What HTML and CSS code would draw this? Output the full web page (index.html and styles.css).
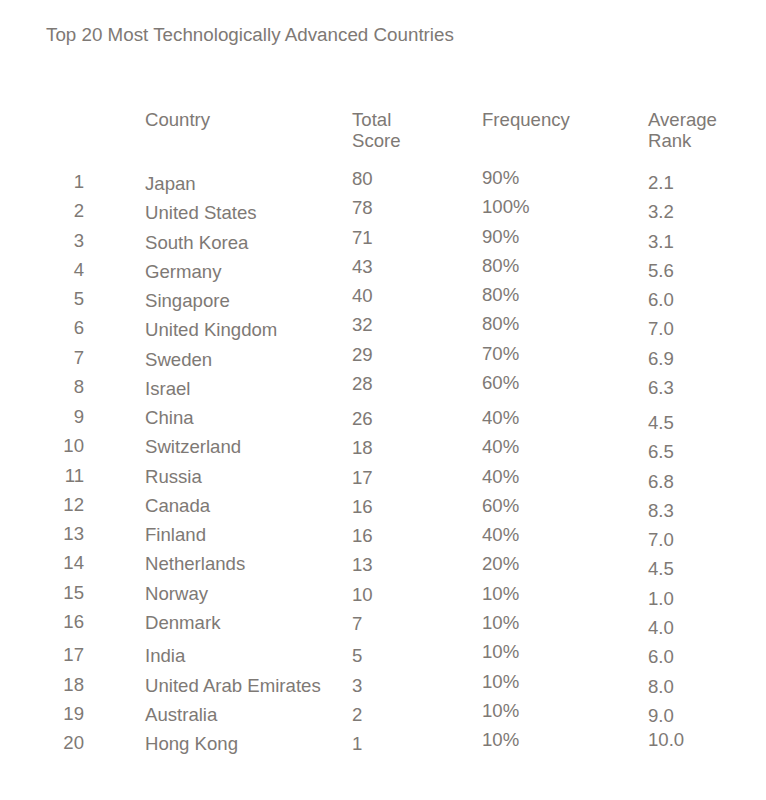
FILE: index.html
```html
<!DOCTYPE html>
<html lang="en">
<head>
<meta charset="utf-8">
<title>Top 20 Most Technologically Advanced Countries</title>
<link rel="stylesheet" href="styles.css">
</head>
<body>
<main class="page">
  <h1 class="title">Top 20 Most Technologically Advanced Countries</h1>
  <div class="table" role="table">
    <div class="head" role="row">
      <div class="rank" role="columnheader"></div>
      <div class="country" role="columnheader">Country</div>
      <div class="score" role="columnheader">Total<br>Score</div>
      <div class="freq" role="columnheader">Frequency</div>
      <div class="avg" role="columnheader">Average<br>Rank</div>
    </div>

    <div class="group group-a">
      <div class="row" role="row"><div class="rank">1</div><div class="country">Japan</div><div class="score">80</div><div class="freq">90%</div><div class="avg">2.1</div></div>
      <div class="row" role="row"><div class="rank">2</div><div class="country">United States</div><div class="score">78</div><div class="freq">100%</div><div class="avg">3.2</div></div>
      <div class="row" role="row"><div class="rank">3</div><div class="country">South Korea</div><div class="score">71</div><div class="freq">90%</div><div class="avg">3.1</div></div>
      <div class="row" role="row"><div class="rank">4</div><div class="country">Germany</div><div class="score">43</div><div class="freq">80%</div><div class="avg">5.6</div></div>
      <div class="row" role="row"><div class="rank">5</div><div class="country">Singapore</div><div class="score">40</div><div class="freq">80%</div><div class="avg">6.0</div></div>
      <div class="row" role="row"><div class="rank">6</div><div class="country">United Kingdom</div><div class="score">32</div><div class="freq">80%</div><div class="avg">7.0</div></div>
      <div class="row" role="row"><div class="rank">7</div><div class="country">Sweden</div><div class="score">29</div><div class="freq">70%</div><div class="avg">6.9</div></div>
      <div class="row" role="row"><div class="rank">8</div><div class="country">Israel</div><div class="score">28</div><div class="freq">60%</div><div class="avg">6.3</div></div>
    </div>

    <div class="group group-b">
      <div class="row" role="row"><div class="rank">9</div><div class="country">China</div><div class="score">26</div><div class="freq">40%</div><div class="avg">4.5</div></div>
      <div class="row" role="row"><div class="rank">10</div><div class="country">Switzerland</div><div class="score">18</div><div class="freq">40%</div><div class="avg">6.5</div></div>
      <div class="row" role="row"><div class="rank">11</div><div class="country">Russia</div><div class="score">17</div><div class="freq">40%</div><div class="avg">6.8</div></div>
      <div class="row" role="row"><div class="rank">12</div><div class="country">Canada</div><div class="score">16</div><div class="freq">60%</div><div class="avg">8.3</div></div>
      <div class="row" role="row"><div class="rank">13</div><div class="country">Finland</div><div class="score">16</div><div class="freq">40%</div><div class="avg">7.0</div></div>
      <div class="row" role="row"><div class="rank">14</div><div class="country">Netherlands</div><div class="score">13</div><div class="freq">20%</div><div class="avg">4.5</div></div>
      <div class="row" role="row"><div class="rank">15</div><div class="country">Norway</div><div class="score">10</div><div class="freq">10%</div><div class="avg">1.0</div></div>
      <div class="row" role="row"><div class="rank">16</div><div class="country">Denmark</div><div class="score">7</div><div class="freq">10%</div><div class="avg">4.0</div></div>
    </div>

    <div class="group group-c">
      <div class="row" role="row"><div class="rank">17</div><div class="country">India</div><div class="score">5</div><div class="freq">10%</div><div class="avg">6.0</div></div>
      <div class="row" role="row"><div class="rank">18</div><div class="country">United Arab Emirates</div><div class="score">3</div><div class="freq">10%</div><div class="avg">8.0</div></div>
      <div class="row" role="row"><div class="rank">19</div><div class="country">Australia</div><div class="score">2</div><div class="freq">10%</div><div class="avg">9.0</div></div>
      <div class="row" role="row"><div class="rank">20</div><div class="country">Hong Kong</div><div class="score">1</div><div class="freq">10%</div><div class="avg">10.0</div></div>
    </div>
  </div>
</main>
</body>
</html>
```

FILE: styles.css
```css
html, body {
  margin: 0;
  padding: 0;
  background: #ffffff;
}

.page {
  width: 766px;
  min-height: 800px;
  font-family: "Liberation Sans", Arial, sans-serif;
  font-size: 18.6px;
  color: #7e7975;
}

.title {
  margin: 0;
  padding: 24px 0 0 46px;
  font-size: 18.8px;
  font-weight: normal;
  line-height: 22px;
}

.table {
  margin-top: 63px;
}

.head,
.row {
  display: grid;
  grid-template-columns: 145px 207px 130px 166px 1fr;
  align-items: start;
}

.head {
  line-height: 21px;
}

.row {
  height: 29.27px;
  line-height: 29.27px;
  white-space: nowrap;
}

.rank {
  text-align: right;
  padding-right: 61px;
}

.group-a {
  margin-top: 16px;
}

.group-b {
  margin-top: 1px;
}

.group-c {
  margin-top: 4px;
}

/* column baselines drift slightly per block, as in the source layout */
.group-a .country { margin-top: 2px; }
.group-a .score { margin-top: -3px; }
.group-a .freq { margin-top: -4px; }
.group-a .avg { margin-top: 1px; }

.group-b .country { margin-top: 1px; }
.group-b .score { margin-top: 2px; }
.group-b .freq { margin-top: 1px; }
.group-b .avg { margin-top: 6px; }

.group-c .country { margin-top: 1px; }
.group-c .score { margin-top: 1px; }
.group-c .freq { margin-top: -3px; }
.group-c .avg { margin-top: 2px; }
.group-c .row:last-child .avg { margin-top: -3px; }
```
